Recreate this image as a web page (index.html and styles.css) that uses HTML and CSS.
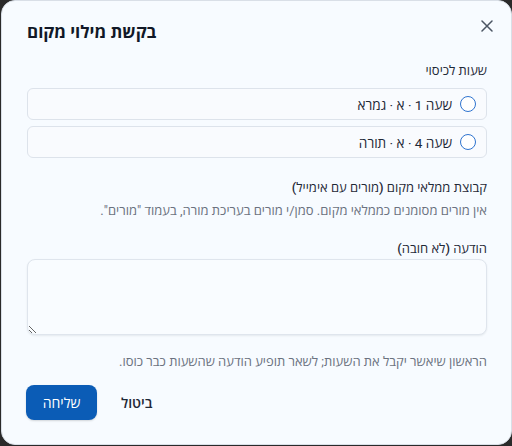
FILE: index.html
```html
<!DOCTYPE html>
<html lang="he" dir="rtl">
<head>
<meta charset="utf-8">
<link rel="stylesheet" href="styles.css">
</head>
<body>
<div class="dialog">
  <div class="header">
    <h2 class="title">בקשת מילוי מקום</h2>
    <button class="close" aria-label="סגירה">
      <svg width="12" height="12" viewBox="0 0 12 12"><path d="M1 1L11 11M11 1L1 11" stroke="#4b5563" stroke-width="1.5" stroke-linecap="round" fill="none"/></svg>
    </button>
  </div>

  <div class="section">
    <div class="label">שעות לכיסוי</div>
    <div class="options">
      <label class="option"><span class="radio"></span><span>שעה 1 · א · גמרא</span></label>
      <label class="option"><span class="radio"></span><span>שעה 4 · א · תורה</span></label>
    </div>
  </div>

  <div class="section gap2">
    <div class="label">קבוצת ממלאי מקום (מורים עם אימייל)</div>
    <div class="hint">אין מורים מסומנים כממלאי מקום. סמן/י מורים בעריכת מורה, בעמוד "מורים".</div>
  </div>

  <div class="section gap3">
    <div class="label tight">הודעה (לא חובה)</div>
    <textarea class="message"></textarea>
  </div>

  <div class="note">הראשון שיאשר יקבל את השעות; לשאר תופיע הודעה שהשעות כבר כוסו.</div>

  <div class="actions">
    <button class="btn-cancel">ביטול</button>
    <button class="btn-primary">שליחה</button>
  </div>
</div>
</body>
</html>
```
FILE: styles.css
```css
html, body {
  margin: 0;
  padding: 0;
  background: #2a2a2a;
}
body {
  font-family: Roboto, "Open Sans", "Noto Sans Hebrew", "DejaVu Sans", sans-serif;
  color: #1f2937;
}
.dialog {
  box-sizing: border-box;
  width: 511px;
  height: 445px;
  background: #f7fbff;
  border: 1px solid #d9dfe7;
  border-radius: 14px;
  padding: 19px 24px 0 25px;
  display: flex;
  flex-direction: column;
}
.header {
  direction: ltr;
  display: flex;
  justify-content: space-between;
  align-items: flex-start;
  height: 24px;
}
.title {
  margin: 0;
  font-size: 17px;
  line-height: 24px;
  font-weight: 700;
  color: #111827;
  direction: rtl;
}
.close {
  border: 0;
  background: transparent;
  padding: 0;
  margin: 0 -6px 0 0;
  width: 12px;
  height: 12px;
  display: flex;
  cursor: pointer;
}
.section {
  margin-top: 18px;
  display: flex;
  flex-direction: column;
}
.section.gap2 {
  margin-top: 21px;
}
.section.gap3 {
  margin-top: 21px;
}
.label {
  font-size: 13px;
  line-height: 18px;
  font-weight: 500;
  color: #1f2937;
  margin-bottom: 8px;
}
.label.tight {
  margin-bottom: 1px;
}
.options {
  display: flex;
  flex-direction: column;
  gap: 6px;
}
.option {
  box-sizing: border-box;
  height: 32px;
  display: flex;
  align-items: center;
  gap: 8px;
  padding: 0 10px;
  border: 1px solid #dde3eb;
  border-radius: 6px;
  background: #f9fbfe;
  font-size: 13.6px;
  color: #1f2937;
}
.radio {
  box-sizing: border-box;
  width: 16px;
  height: 16px;
  border: 1.5px solid #2f74cf;
  border-radius: 50%;
  background: #ffffff;
  flex: none;
}
.hint {
  font-size: 13px;
  line-height: 16px;
  color: #6b7280;
  margin-top: -2px;
}
.message {
  box-sizing: border-box;
  height: 76px;
  width: 100%;
  border: 1px solid #dfe5ed;
  border-radius: 8px;
  background: #f9fcff;
  box-shadow: 0 1px 2px rgba(15, 23, 42, 0.08);
  font-family: inherit;
  resize: vertical;
  margin: 0;
}
.note {
  margin-top: 19px;
  font-size: 13px;
  line-height: 16px;
  color: #6b7280;
}
.actions {
  margin-top: 15px;
  display: flex;
  justify-content: flex-end;
  align-items: center;
  gap: 12px;
  margin-left: -1px;
}
.btn-cancel {
  border: 0;
  background: transparent;
  font-family: inherit;
  font-size: 14px;
  font-weight: 600;
  color: #1f2937;
  padding: 0 12px;
  height: 35px;
}
.btn-primary {
  border: 0;
  background: #0b5cb6;
  color: #ffffff;
  font-family: inherit;
  font-size: 14px;
  font-weight: 500;
  width: 71px;
  height: 35px;
  border-radius: 8px;
  box-shadow: 0 1px 2px rgba(0, 0, 0, 0.15);
}
```
